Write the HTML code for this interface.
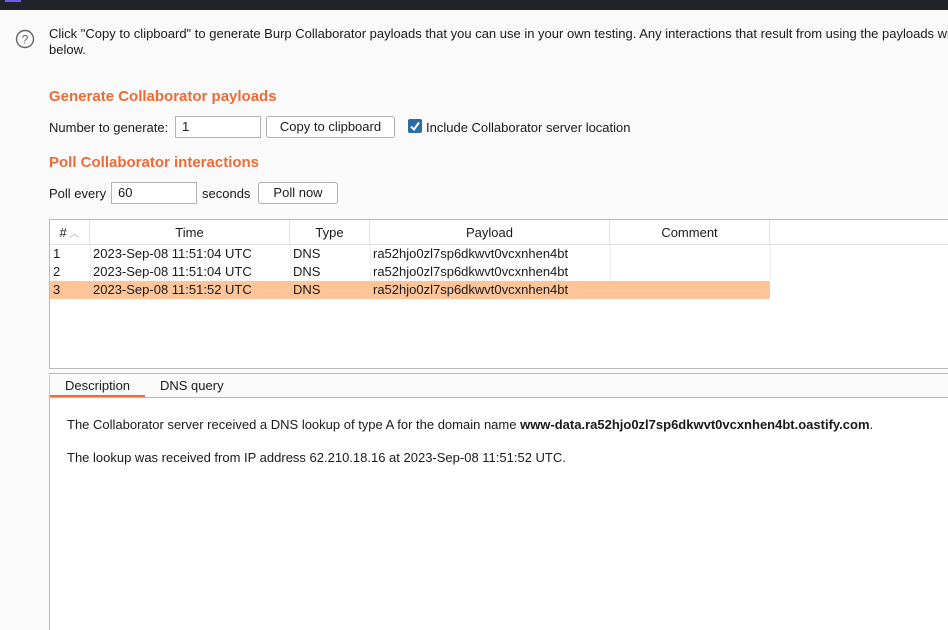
<!DOCTYPE html>
<html><head><style>
html,body{overflow:hidden}
body{margin:0;width:948px;height:630px;overflow:hidden;background:#fafafa;font-family:"Liberation Sans",sans-serif;font-size:13px;color:#1a1a1a;position:relative}
.a{position:absolute;white-space:nowrap}
.h{color:#f06a35;font-size:15px;font-weight:bold}
.in{position:absolute;background:#fff;border:1px solid #b5b5b5;box-sizing:border-box;padding:2px 6px}
.btn{position:absolute;background:#fff;border:1px solid #adadad;border-radius:3px;box-sizing:border-box;text-align:center;line-height:20px}
.col{position:absolute;top:0;height:25px;border-right:1px solid #e2e2e2;text-align:center;line-height:25px;box-sizing:border-box}
.row{position:absolute;left:0;height:18px;line-height:18px;width:720px}
.row span{position:absolute}
</style></head><body>
<div class="a" style="left:0;top:0;width:948px;height:10px;background:#22242c"></div>
<div class="a" style="left:5px;top:0;width:16px;height:2px;background:#6c5ce7"></div>
<svg class="a" style="left:15px;top:29px" width="20" height="20"><circle cx="10" cy="10" r="8.5" fill="none" stroke="#666" stroke-width="1.4"/><text x="10" y="14.5" font-size="12" text-anchor="middle" fill="#666" font-family="Liberation Sans">?</text></svg>
<div class="a" style="left:49px;top:26px;line-height:16px;width:899px;overflow:hidden">Click "Copy to clipboard" to generate Burp Collaborator payloads that you can use in your own testing. Any interactions that result from using the payloads will appear<br>below.</div>
<div class="a h" style="left:49px;top:88px">Generate Collaborator payloads</div>
<div class="a" style="left:49px;top:120px">Number to generate:</div>
<div class="in" style="left:175px;top:116px;width:86px;height:22px">1</div>
<div class="btn" style="left:266px;top:116px;width:129px;height:22px">Copy to clipboard</div>
<div class="a" style="left:408px;top:119px;width:14px;height:14px;background:#2c6ba8;border-radius:2px"><svg width="14" height="14"><path d="M3 7.5 L6 10.5 L11 3.5" stroke="#fff" stroke-width="2" fill="none"/></svg></div>
<div class="a" style="left:426px;top:120px">Include Collaborator server location</div>
<div class="a h" style="left:49px;top:154px">Poll Collaborator interactions</div>
<div class="a" style="left:49px;top:186px">Poll every</div>
<div class="in" style="left:111px;top:182px;width:86px;height:22px">60</div>
<div class="a" style="left:202px;top:186px">seconds</div>
<div class="btn" style="left:258px;top:182px;width:80px;height:22px">Poll now</div>
<div class="a" style="left:49px;top:219px;width:899px;height:150px;background:#fff;border:1px solid #b8b8b8;border-right:none;box-sizing:border-box;overflow:hidden">
 <div class="a" style="left:0;top:0;width:899px;height:25px;border-bottom:1px solid #e2e2e2;box-sizing:border-box"></div>
 <div class="col" style="left:0;width:40px">#<span style="color:#aaa;font-size:10px"> ︿</span></div>
 <div class="col" style="left:40px;width:200px">Time</div>
 <div class="col" style="left:240px;width:80px">Type</div>
 <div class="col" style="left:320px;width:240px">Payload</div>
 <div class="col" style="left:560px;width:160px">Comment</div>
 <div class="a" style="left:40px;top:25px;height:36px;border-left:1px solid #eee"></div>
 <div class="a" style="left:240px;top:25px;height:36px;border-left:1px solid #eee"></div>
 <div class="a" style="left:320px;top:25px;height:36px;border-left:1px solid #eee"></div>
 <div class="a" style="left:560px;top:25px;height:36px;border-left:1px solid #eee"></div>
 <div class="a" style="left:720px;top:25px;height:36px;border-left:1px solid #eee"></div>
 <div class="row" style="top:25px"><span style="left:3px">1</span><span style="left:43px">2023-Sep-08 11:51:04 UTC</span><span style="left:243px">DNS</span><span style="left:323px">ra52hjo0zl7sp6dkwvt0vcxnhen4bt</span></div>
 <div class="row" style="top:43px"><span style="left:3px">2</span><span style="left:43px">2023-Sep-08 11:51:04 UTC</span><span style="left:243px">DNS</span><span style="left:323px">ra52hjo0zl7sp6dkwvt0vcxnhen4bt</span></div>
 <div class="row" style="top:61px;background:#ffc497"><span style="left:3px">3</span><span style="left:43px">2023-Sep-08 11:51:52 UTC</span><span style="left:243px">DNS</span><span style="left:323px">ra52hjo0zl7sp6dkwvt0vcxnhen4bt</span></div>
</div>
<div class="a" style="left:49px;top:373px;width:899px;height:1px;background:#b8b8b8"></div>
<div class="a" style="left:49px;top:375px;width:899px;height:22px;border-left:1px solid #ccc;box-sizing:border-box"></div>
<div class="a" style="left:65px;top:378px">Description</div>
<div class="a" style="left:50px;top:395px;width:95px;height:2px;background:#f06a35"></div>
<div class="a" style="left:160px;top:378px">DNS query</div>
<div class="a" style="left:49px;top:397px;width:899px;height:233px;background:#fff;border-left:1px solid #b8b8b8;border-top:1px solid #b8b8b8;box-sizing:border-box"></div>
<div class="a" style="left:67px;top:417px">The Collaborator server received a DNS lookup of type A for the domain name <b>www-data.ra52hjo0zl7sp6dkwvt0vcxnhen4bt.oastify.com</b>.</div>
<div class="a" style="left:67px;top:450px">The lookup was received from IP address 62.210.18.16 at 2023-Sep-08 11:51:52 UTC.</div>
</body></html>
